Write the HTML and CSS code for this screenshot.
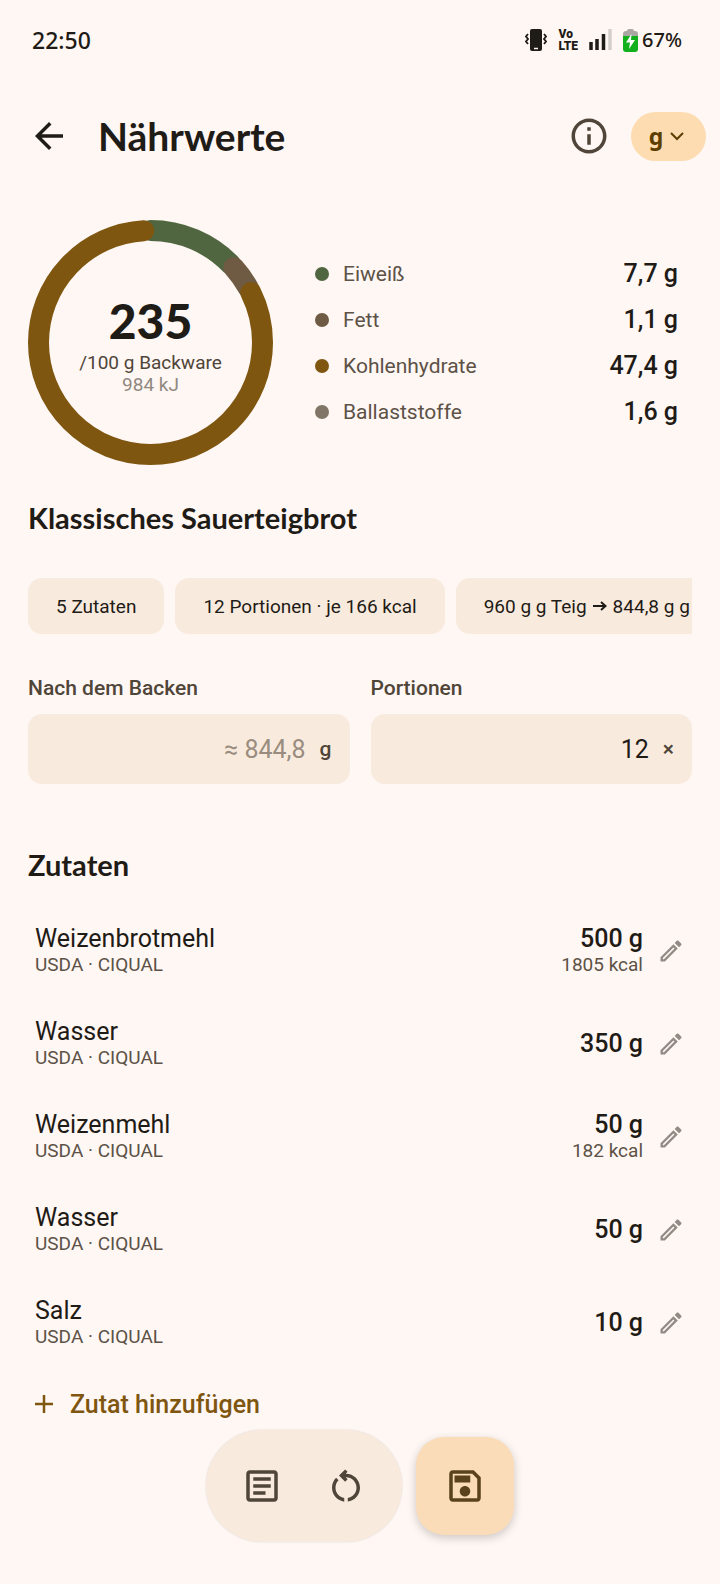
FILE: index.html
```
<!DOCTYPE html>
<html lang="de">

<head>
  <meta charset="UTF-8">
  <meta name="viewport" content="width=device-width, initial-scale=1.0">
  <title>Nährwerte</title>
  <link rel="stylesheet" href="styles.css">
</head>

<body>
  <svg width="0" height="0" class="sprite" aria-hidden="true">
    <symbol id="pencil" viewBox="0 0 24 24">
      <path d="M14.06 9.02l.92.92L5.92 19H5v-.92l9.06-9.06M17.66 3c-.25 0-.51.1-.7.29l-1.83 1.83 3.75 3.75 1.83-1.83c.39-.39.39-1.02 0-1.41l-2.34-2.34c-.2-.2-.45-.29-.71-.29zm-3.6 3.19L3 17.25V21h3.75L17.81 9.94l-3.75-3.75z"/>
    </symbol>
  </svg>

  <div class="status">
    <span class="uhr">22:50</span>
    <div class="status-icons">
      <svg width="22" height="22" viewBox="0 0 22 22">
        <rect x="5" y="0" width="12" height="22" rx="2" fill="#1f1b16"/>
        <path d="M9 19.500h4" stroke="#fff7f4" stroke-width="1.500"/>
        <path d="M3 5l-2 2.500L3 10l-2 2.500L3 15M19 5l2 2.500L19 10l2 2.500L19 15" fill="none" stroke="#1f1b16" stroke-width="1.800"/>
      </svg>
      <span class="volte"><span>Vo</span><span>LTE</span></span>
      <svg width="23" height="22" viewBox="0 0 23 22">
        <path d="M2 13v8M8 10v11M14.500 5v16" stroke="#1f1b16" stroke-width="3.500"/>
        <path d="M21 0v21" stroke="#d5cfcb" stroke-width="3.500"/>
      </svg>
      <span class="akku">
        <svg width="15" height="23" viewBox="0 0 15 23">
          <path d="M4 2q0-2 2-2h3q2 0 2 2h1q3 0 3 3v3H0V5q0-3 3-3z" fill="#aaa6a4"/>
          <path d="M0 7h15v13q0 3-3 3H3q-3 0-3-3z" fill="#12b01c"/>
          <path d="M8.500 5L3 13.500h4L6 20l6-9H8z" fill="#fff"/>
        </svg>
        67%
      </span>
    </div>
  </div>

  <header>
    <button type="button" class="icon-btn" aria-label="Zurück">
      <svg width="42" height="42" viewBox="0 0 24 24"><path d="M20 11H7.830l5.590-5.590L12 4l-8 8 8 8 1.410-1.410L7.830 13H20z"/></svg>
    </button>
    <h1>Nährwerte</h1>
    <button type="button" class="icon-btn info" aria-label="Info">
      <svg width="42" height="42" viewBox="0 0 24 24"><path d="M11 7h2v2h-2zm0 4h2v6h-2zm1-9C6.480 2 2 6.480 2 12s4.480 10 10 10 10-4.480 10-10S17.520 2 12 2zm0 18c-4.410 0-8-3.590-8-8s3.590-8 8-8 8 3.590 8 8-3.590 8-8 8z"/></svg>
    </button>
    <button type="button" class="einheit">
      g
      <svg width="14" height="9" viewBox="0 0 14 9"><path d="M1 1l6 6 6-6" fill="none" stroke="#5c3f00" stroke-width="2"/></svg>
    </button>
  </header>

  <main>
    <section class="uebersicht">
      <div class="ring">
        <svg viewBox="0 0 245 245">
          <g transform="rotate(-90 122.500 122.500)" fill="none" stroke-width="21" stroke-linecap="round">
            <circle cx="122.500" cy="122.500" r="112" pathLength="360" stroke="#506640" stroke-dasharray="46 314"/>
            <circle cx="122.500" cy="122.500" r="112" pathLength="360" stroke="#6f5b43" stroke-dasharray="13 347" stroke-dashoffset="-48"/>
            <circle cx="122.500" cy="122.500" r="112" pathLength="360" stroke="#7f5610" stroke-dasharray="293 67" stroke-dashoffset="-63.500"/>
          </g>
        </svg>
        <div class="ring-text">
          <strong>235</strong>
          <span>/100 g Backware</span>
          <span class="kj">984 kJ</span>
        </div>
      </div>

      <ul class="legende">
        <li><i class="punkt eiweiss"></i>Eiweiß <b>7,7 g</b></li>
        <li><i class="punkt fett"></i>Fett <b>1,1 g</b></li>
        <li><i class="punkt kh"></i>Kohlenhydrate <b>47,4 g</b></li>
        <li><i class="punkt ballast"></i>Ballaststoffe <b>1,6 g</b></li>
      </ul>
    </section>

    <h2>Klassisches Sauerteigbrot</h2>

    <div class="chips">
      <span class="chip">5 Zutaten</span>
      <span class="chip">12 Portionen · je 166 kcal</span>
      <span class="chip">960 g g Teig <svg width="14" height="12" viewBox="0 0 14 12"><path d="M0 6h12M8 2l4.500 4L8 10" fill="none" stroke="#1f1b16" stroke-width="2"/></svg> 844,8 g g</span>
    </div>

    <form class="felder">
      <div class="feld">
        <label for="gewicht">Nach dem Backen</label>
        <div class="eingabe"><input id="gewicht" type="text" placeholder="≈ 844,8"><span>g</span></div>
      </div>
      <div class="feld">
        <label for="portionen">Portionen</label>
        <div class="eingabe"><input id="portionen" type="text" value="12"><span>×</span></div>
      </div>
    </form>

    <h2>Zutaten</h2>

    <ul class="zutaten">
      <li>
        <div class="name">Weizenbrotmehl<small>USDA · CIQUAL</small></div>
        <div class="menge">500 g<small>1805 kcal</small></div>
        <button type="button" class="edit" aria-label="Weizenbrotmehl bearbeiten"><svg><use href="#pencil"/></svg></button>
      </li>
      <li>
        <div class="name">Wasser<small>USDA · CIQUAL</small></div>
        <div class="menge">350 g</div>
        <button type="button" class="edit" aria-label="Wasser bearbeiten"><svg><use href="#pencil"/></svg></button>
      </li>
      <li>
        <div class="name">Weizenmehl<small>USDA · CIQUAL</small></div>
        <div class="menge">50 g<small>182 kcal</small></div>
        <button type="button" class="edit" aria-label="Weizenmehl bearbeiten"><svg><use href="#pencil"/></svg></button>
      </li>
      <li>
        <div class="name">Wasser<small>USDA · CIQUAL</small></div>
        <div class="menge">50 g</div>
        <button type="button" class="edit" aria-label="Wasser bearbeiten"><svg><use href="#pencil"/></svg></button>
      </li>
      <li>
        <div class="name">Salz<small>USDA · CIQUAL</small></div>
        <div class="menge">10 g</div>
        <button type="button" class="edit" aria-label="Salz bearbeiten"><svg><use href="#pencil"/></svg></button>
      </li>
    </ul>

    <button type="button" class="hinzufuegen">
      <svg width="18" height="18" viewBox="0 0 18 18"><path d="M9 0v18M0 9h18" stroke="#7f5610" stroke-width="2.500"/></svg>
      Zutat hinzufügen
    </button>
  </main>

  <nav class="toolbar">
    <div class="pille">
      <button type="button" aria-label="Rezept">
        <svg viewBox="0 0 24 24"><path d="M19 5v14H5V5h14m0-2H5c-1.100 0-2 .9-2 2v14c0 1.100.9 2 2 2h14c1.100 0 2-.9 2-2V5c0-1.100-.9-2-2-2zM14 17H7v-2h7v2zm3-4H7v-2h10v2zm0-4H7V7h10v2z"/></svg>
      </button>
      <button type="button" aria-label="Zurücksetzen">
        <svg viewBox="0 0 24 24">
          <path d="M13 21.900c3.950-.49 7-3.850 7-7.930 0-4.420-3.580-8-8-8-.06 0-.12.010-.18.010l1.090-1.090L11.500 3.500 8 7l3.500 3.500 1.410-1.410-1.080-1.080c.06 0 .12-.010.17-.010 3.310 0 6 2.690 6 6 0 2.970-2.170 5.430-5 5.910zM6 14c0-1.650.67-3.150 1.760-4.240L6.340 8.340C4.900 9.790 4 11.790 4 14c0 4.080 3.050 7.440 7 7.930v-2.020c-2.830-.48-5-2.940-5-5.910z" transform="translate(0 -1)"/>
        </svg>
      </button>
    </div>
    <button type="button" class="speichern" aria-label="Speichern">
      <svg viewBox="0 0 24 24"><path d="M17 3H5c-1.110 0-2 .9-2 2v14c0 1.100.89 2 2 2h14c1.100 0 2-.9 2-2V7l-4-4zm2 16H5V5h11.170L19 7.830V19zm-7-7c-1.660 0-3 1.340-3 3s1.340 3 3 3 3-1.340 3-3-1.340-3-3-3zM6 6h9v4H6z"/></svg>
    </button>
  </nav>
</body>

</html>
```

FILE: styles.css
```
* {
  box-sizing: border-box;
}

body {
  margin: 0;
  background: #fff7f4;
  color: #1f1b16;
  font-family: Roboto, sans-serif;
  font-size: 25px;
}

h1,
h2,
ul {
  margin: 0;
  padding: 0;
}

ul {
  list-style: none;
}

button {
  border: none;
  background: none;
  padding: 0;
  margin: 0;
  font: inherit;
  color: inherit;
  display: flex;
  align-items: center;
  justify-content: center;
  cursor: pointer;
}

svg {
  display: block;
  flex: none;
}

.sprite {
  position: absolute;
}

/* Statusleiste */
.status {
  height: 80px;
  padding: 0 38px 0 32px;
  display: flex;
  align-items: center;
  justify-content: space-between;
  font-family: "Noto Sans", sans-serif;
  font-size: 23px;
  line-height: 28px;
  font-weight: 500;
}

.status-icons {
  display: flex;
  align-items: center;
  gap: 11px;
}

.volte {
  display: flex;
  flex-direction: column;
  font-family: Roboto, sans-serif;
  font-size: 12px;
  line-height: 12px;
  font-weight: 900;
}

.akku {
  display: flex;
  align-items: center;
  gap: 4px;
  font-size: 20px;
}

/* Kopfzeile */
header {
  height: 112px;
  padding: 0 14px 0 28px;
  display: flex;
  align-items: center;
}

h1 {
  flex: 1;
  margin-left: 28px;
  font-family: Lato, sans-serif;
  font-size: 39px;
  line-height: 48px;
  font-weight: 700;
}

.icon-btn svg {
  fill: #1f1b16;
}

.info svg {
  fill: #4f4539;
}

.einheit {
  width: 75px;
  height: 49px;
  margin-left: 21px;
  padding-right: 4px;
  gap: 7px;
  border-radius: 25px;
  background: #fddcb2;
  color: #5c3f00;
  font-family: "Noto Sans", sans-serif;
  font-size: 23px;
  font-weight: 700;
}

main {
  padding: 28px 28px 0;
}

/* Ring und Legende */
.uebersicht {
  display: flex;
  align-items: center;
  gap: 42px;
  padding-right: 14px;
}

.ring {
  width: 245px;
  flex: none;
  display: grid;
  place-items: center;
}

.ring > * {
  grid-area: 1 / 1;
}

.ring > svg {
  width: 100%;
}

.ring-text {
  display: flex;
  flex-direction: column;
  align-items: center;
  font-size: 19px;
  line-height: 22px;
  color: #4f4539;
}

.ring-text strong {
  font-family: Lato, sans-serif;
  font-size: 48px;
  line-height: 62px;
  font-weight: 900;
  color: #1f1b16;
}

.ring-text .kj {
  color: #918880;
}

.legende {
  flex: 1;
}

.legende li {
  display: flex;
  align-items: center;
  height: 46px;
  font-size: 21px;
  color: #5c5247;
}

.legende b {
  margin-left: auto;
  font-size: 25px;
  font-weight: 500;
  color: #1f1b16;
}

.punkt {
  width: 14px;
  height: 14px;
  margin-right: 14px;
  border-radius: 50%;
}

.eiweiss {
  background: #506640;
}

.fett {
  background: #6f5b43;
}

.kh {
  background: #7f5610;
}

.ballast {
  background: #817567;
}

h2 {
  margin-top: 35px;
  font-family: Lato, sans-serif;
  font-size: 29px;
  line-height: 36px;
  font-weight: 700;
}

/* Chips */
.chips {
  display: flex;
  gap: 11px;
  margin-top: 42px;
  overflow: hidden;
}

.chip {
  flex: none;
  display: flex;
  align-items: center;
  gap: 6px;
  height: 56px;
  padding: 0 28px;
  border-radius: 14px;
  background: #f8ebde;
  font-size: 19px;
}

/* Eingabefelder */
.felder {
  display: grid;
  grid-template-columns: repeat(2, minmax(0, 1fr));
  gap: 21px;
  margin-top: 42px;
}

.feld label {
  display: block;
  font-size: 21px;
  line-height: 24px;
  font-weight: 500;
  color: #4f4539;
}

.eingabe {
  display: flex;
  align-items: center;
  gap: 14px;
  height: 70px;
  margin-top: 14px;
  padding: 0 18px;
  border-radius: 14px;
  background: #f8ebde;
  font-size: 21px;
  font-weight: 500;
  color: #4f4539;
}

.eingabe input {
  flex: 1;
  min-width: 0;
  border: none;
  outline: none;
  padding: 0;
  background: none;
  font-family: inherit;
  font-size: 25px;
  text-align: right;
  color: #1f1b16;
}

.eingabe input::placeholder {
  color: #9a8d80;
  opacity: 1;
}

.felder + h2 {
  margin-top: 63px;
}

/* Zutatenliste */
.zutaten {
  margin-top: 21px;
}

.zutaten li {
  display: flex;
  align-items: center;
  height: 93px;
  padding: 0 7px;
  line-height: 28px;
}

.zutaten small {
  display: block;
  font-size: 19px;
  line-height: 23px;
  font-weight: 400;
  color: #5c5247;
}

.menge {
  margin-left: auto;
  text-align: right;
  font-weight: 500;
}

.edit {
  width: 28px;
  height: 28px;
  margin-left: 14px;
}

.edit svg {
  width: 28px;
  height: 28px;
  fill: #918b86;
}

.hinzufuegen {
  height: 70px;
  padding: 0 7px;
  gap: 17px;
  font-weight: 500;
  color: #7f5610;
}

/* Schwebende Leiste am unteren Rand */
.toolbar {
  position: fixed;
  left: 0;
  right: 0;
  bottom: 42px;
  display: flex;
  align-items: center;
  justify-content: center;
  gap: 14px;
}

.toolbar svg {
  width: 42px;
  height: 42px;
  fill: #4f4539;
}

.pille {
  display: flex;
  padding: 14px;
  border-radius: 56px;
  background: #f8ebde;
  box-shadow: 0 0 2px rgba(0, 0, 0, 0.15);
}

.pille button {
  width: 84px;
  height: 84px;
}

.speichern {
  width: 98px;
  height: 98px;
  border-radius: 28px;
  background: #fadcb9;
  box-shadow: 0 3px 10px rgba(0, 0, 0, 0.2);
}

.speichern svg {
  fill: #5a431c;
}
```
